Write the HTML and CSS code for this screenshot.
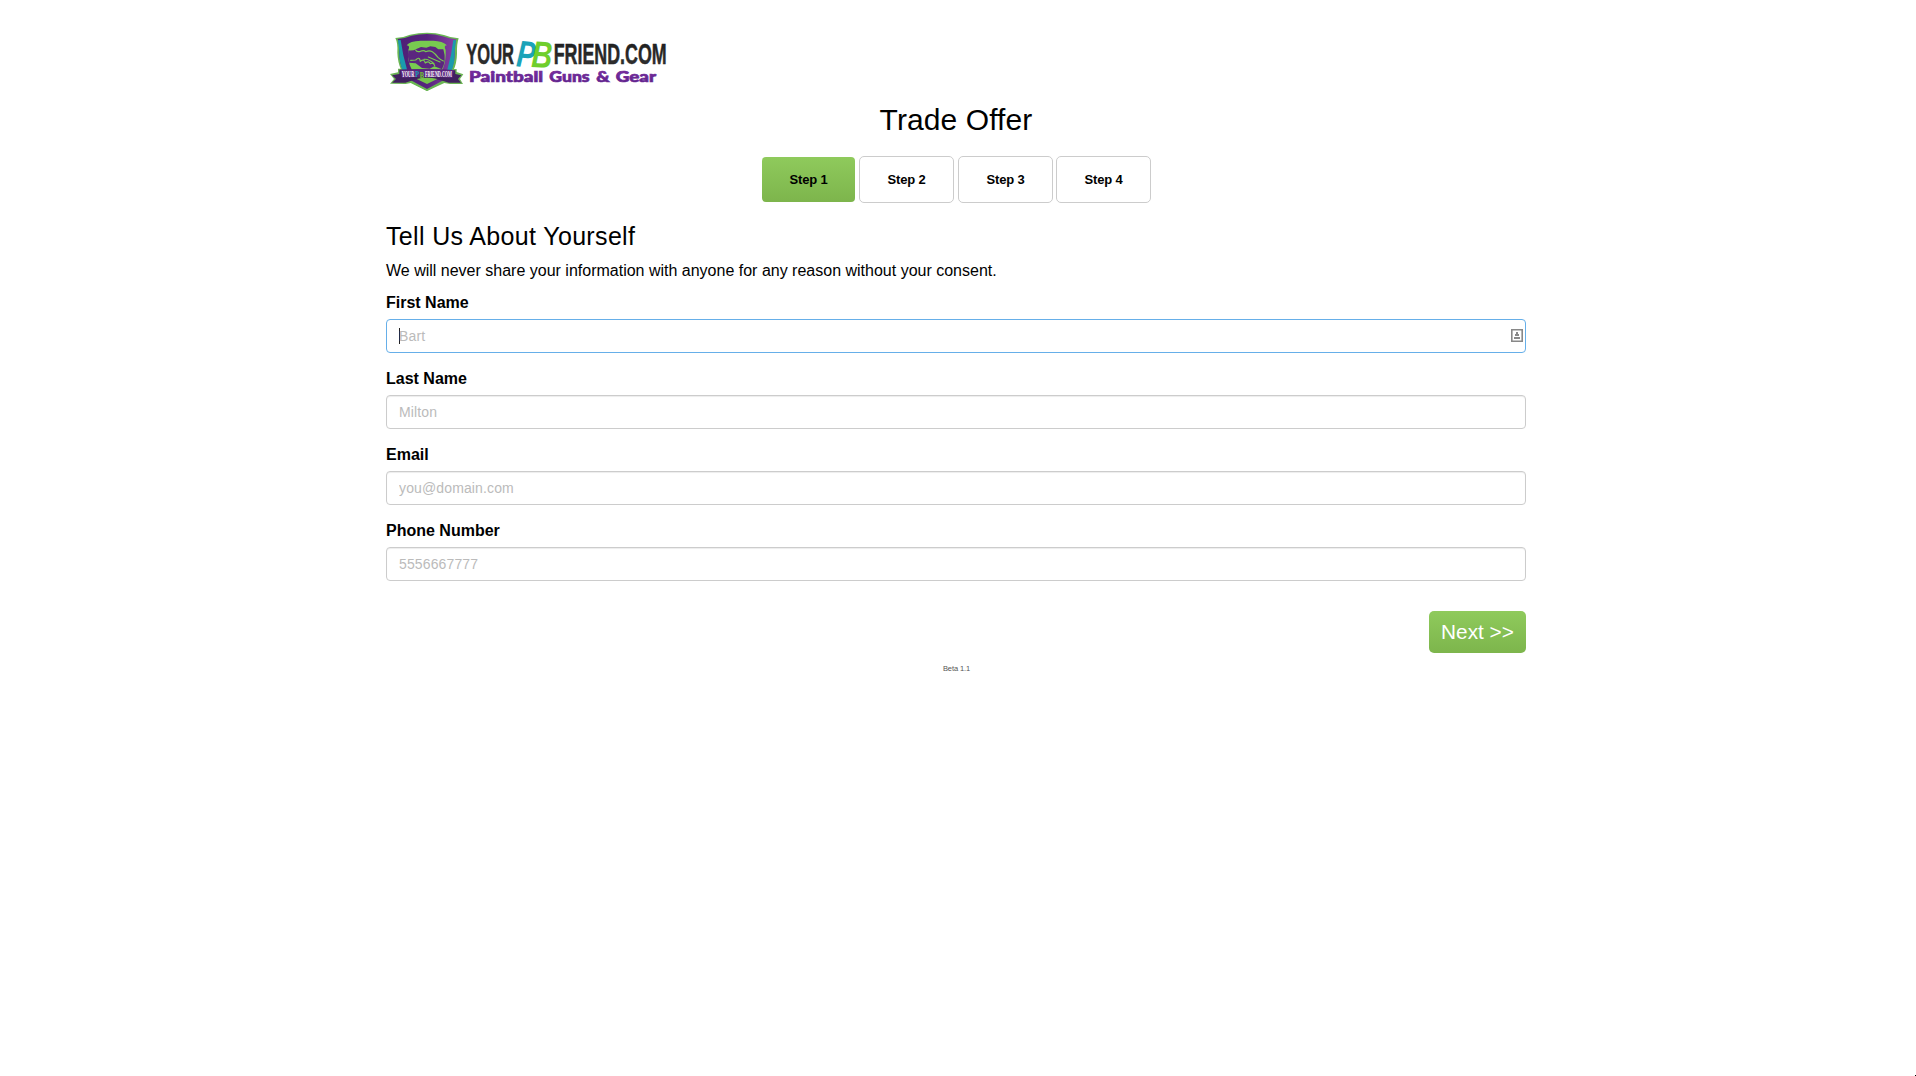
FILE: index.html
```html
<!DOCTYPE html>
<html lang="en">
<head>
<meta charset="utf-8">
<title>Trade Offer</title>
<link rel="stylesheet" href="styles.css">
</head>
<body>
<main class="container">
  <svg class="logo" viewBox="18 0 870 210" role="img" aria-label="YourPBFriend.com Paintball Guns &amp; Gear">
    <defs>
      <linearGradient id="ink" x2="0" y2="1"><stop offset="0" stop-color="#1c1c1c"/><stop offset="1" stop-color="#333"/></linearGradient>
      <linearGradient id="purple" x2="0" y2="1"><stop offset="0" stop-color="#8531a8"/><stop offset="1" stop-color="#562184"/></linearGradient>
      <linearGradient id="shield"><stop offset="0" stop-color="#4e2076"/><stop offset=".5" stop-color="#56237e"/><stop offset="1" stop-color="#8a41a5"/></linearGradient>
    </defs>
    <path fill="#6cb455" d="M30 147 54 142V131L230 132V141L250 148 240 162 249 177 210 177 193 174 141 198 92 174 77 177 30 176 42 162Z"/>
    <path fill="#69b653" d="M46 39Q70 38 90 29Q116 23 141 23Q168 23 192 30Q214 39 236 40Q230 57 231 86Q230 143 190 171L141 198 94 173Q54 141 52 83Q54 55 46 39Z"/>
    <path fill="url(#shield)" d="M53 42Q76 40 95 32Q118 27 141 27Q165 27 188 34Q210 41 229 43Q224 60 225 88Q221 145 186 168L141 192 98 169Q58 140 58 83Q59 57 53 42Z"/>
    <path fill="#1a9bad" d="M54 46 62 45Q68 90 82 137L67 134Q57 108 58 78ZM228 46 220 45Q215 90 201 137L216 134Q225 108 224 78Z"/>
    <path fill="#78cb50" d="M80 61Q89 48 122 47H160Q188 48 201 61Q190 61 197 75Q199 107 187 136H96Q80 105 85 75Q91 62 80 61Z"/>
    <path fill="#5b267f" d="M85 76Q99 78 109 72L123 66 139 68 151 64 166 66 175 73 190 73Q200 105 186 133L163 124 149 131 126 129 107 115 87 113Q81 94 85 76Z"/>
    <g fill="none" stroke="#78cb50" stroke-width="3.5" stroke-linecap="round" stroke-linejoin="round">
      <path d="M107 75Q110 82 121 79Q132 74 137 80Q148 75 157 80Q165 85 174 97Q181 104 190 108"/>
      <path d="M92 106 107 105Q119 93 121 109Q132 100 136 114Q146 106 151 116Q161 112 164 122M132 103Q146 101 162 116M145 96 180 111"/>
    </g>
    <path fill="#41205f" d="M36 151 58 147V134Q141 130 226 136V147L244 151 234 162 243 173 206 173 190 168Q141 151 92 168L76 173 36 173 48 162Z"/>
    <path fill="#5b267f" d="M61 134Q141 129 222 135L217 159Q141 151 66 159Z"/>
    <path fill="#76c34c" d="M110 162Q141 154 172 162L141 177Z"/>
    <text class="ribbon" x="65" y="155" textLength="38" lengthAdjust="spacingAndGlyphs">YOUR</text>
    <text class="ribbon teal" x="105" y="156" textLength="12" lengthAdjust="spacingAndGlyphs">P</text>
    <text class="ribbon lime" x="119" y="158" textLength="13" lengthAdjust="spacingAndGlyphs">B</text>
    <text class="ribbon" x="135" y="155" textLength="81" lengthAdjust="spacingAndGlyphs">FRIEND.COM</text>
    <text class="wordmark" x="259" y="118" textLength="143" lengthAdjust="spacingAndGlyphs">YOUR</text>
    <text class="wordmark" x="521" y="118" textLength="339" lengthAdjust="spacingAndGlyphs">FRIEND.COM</text>
    <text class="brush teal" transform="translate(407 124) rotate(5)" textLength="56" lengthAdjust="spacingAndGlyphs">P</text>
    <text class="brush lime" transform="translate(453 126) rotate(3)" textLength="62" lengthAdjust="spacingAndGlyphs">B</text>
    <text class="tagline" x="267" y="171" textLength="222" lengthAdjust="spacingAndGlyphs">Paintball</text>
    <text class="tagline" x="508" y="171" textLength="121" lengthAdjust="spacingAndGlyphs">Guns</text>
    <text class="tagline" x="649" y="171" textLength="40" lengthAdjust="spacingAndGlyphs">&amp;</text>
    <text class="tagline" x="707" y="171" textLength="121" lengthAdjust="spacingAndGlyphs">Gear</text>
  </svg>
  <h1 class="title">Trade Offer</h1>
  <nav class="steps">
    <span class="step step-active">Step 1</span>
    <span class="step">Step 2</span>
    <span class="step step-wide">Step 3</span>
    <span class="step">Step 4</span>
  </nav>
  <h2 class="heading">Tell Us About Yourself</h2>
  <p class="intro">We will never share your information with anyone for any reason without your consent.</p>
  <form class="form">
    <label class="label" for="first">First Name</label>
    <div class="field field-focus">
      <i class="caret"></i>
      <input class="input" id="first" placeholder="Bart">
      <svg class="card-icon" viewBox="0 0 12 13"><path fill="#fff" stroke="#888" stroke-width="1.6" d="M.8.8h10.4v11.4H.8z"/><path fill="#888" d="M5 3h2v3H5zM4 5h4v2H4zM3 8h6v2H3z"/></svg>
    </div>
    <label class="label" for="last">Last Name</label>
    <div class="field"><input class="input" id="last" placeholder="Milton"></div>
    <label class="label" for="email">Email</label>
    <div class="field"><input class="input" id="email" placeholder="you@domain.com"></div>
    <label class="label" for="phone">Phone Number</label>
    <div class="field"><input class="input" id="phone" placeholder="5556667777"></div>
    <button class="next" type="button">Next &gt;&gt;</button>
  </form>
  <footer class="version">Beta 1.1</footer>
</main>
<i class="corner"></i>
</body>
</html>
```
FILE: styles.css
```css
* { box-sizing: border-box; }
body {
  margin: 0;
  background: #fff;
  color: #000;
  font-family: "Liberation Sans", Arial, sans-serif;
  font-size: 16px;
  overflow: hidden;
}
.container {
  width: 1140px;
  margin: 0 auto 0 386px;
  padding-top: 25px;
  display: flex;
  flex-direction: column;
}
.logo { width: 290px; height: 70px; overflow: visible; }
.wordmark {
  font: bold 89px "Liberation Sans Narrow", "Liberation Sans", sans-serif;
  fill: url(#ink);
  stroke: #222;
  stroke-width: 1.5;
}
.tagline {
  font: 900 45px Lato, sans-serif;
  fill: url(#purple);
  stroke: #6b2896;
  stroke-width: 2;
}
.brush { font: italic bold 112px "Liberation Sans", sans-serif; }
.ribbon { font: bold 23px "Liberation Serif", serif; fill: #fff; }
.teal { fill: #1ba3b8; }
.lime { fill: #6fce2c; }
.title {
  margin: 7px 0 0;
  font-size: 30px;
  font-weight: normal;
  line-height: 36px;
  letter-spacing: .1px;
  text-align: center;
}
.steps {
  display: flex;
  justify-content: center;
  align-items: center;
  gap: 4px;
  height: 47px;
  margin-top: 18px;
}
.step {
  width: 95px;
  height: 47px;
  border: 1px solid #ccc;
  border-radius: 5px;
  padding-left: 1px;
  font-size: 13px;
  letter-spacing: -.15px;
  font-weight: bold;
  line-height: 46px;
  text-align: center;
}
.step-active {
  width: 93px;
  height: 45px;
  border: 0;
  border-radius: 4px;
  background: linear-gradient(#8fca5c, #7db54c);
}
.step-wide { margin-right: -1px; }
.heading {
  margin: 19px 0 0;
  font-size: 25px;
  font-weight: normal;
  line-height: 29px;
  letter-spacing: .34px;
}
.intro { margin: 10px 0 0; line-height: 20px; }
.form { display: flex; flex-direction: column; margin-top: 4px; }
.label { font-weight: bold; line-height: 20px; margin: 8px 0 6px; }
.field {
  display: flex;
  align-items: center;
  height: 34px;
  margin-bottom: 8px;
  padding: 0 2px 0 12px;
  border: 1px solid #ccc;
  border-radius: 4px;
  box-shadow: inset 0 1px 1px rgba(0, 0, 0, .075);
}
.field-focus { border-color: #66afe9; box-shadow: none; }
.input {
  flex: 1;
  min-width: 0;
  padding: 0;
  border: 0;
  outline: 0;
  background: transparent;
  font: 14px "Liberation Sans", Arial, sans-serif;
  letter-spacing: .13px;
}
.input::placeholder { color: #bbb; opacity: 1; }
.caret { width: 1px; height: 16px; margin-right: -1px; background: #222; }
.card-icon { width: 12px; height: 13px; margin-bottom: 1px; }
.next {
  align-self: flex-end;
  width: 97px;
  height: 42px;
  margin-top: 22px;
  padding: 0;
  border: 0;
  border-radius: 5px;
  background: linear-gradient(#8fca5c, #7db54c);
  color: #fff;
  font: 20.8px "Liberation Sans", Arial, sans-serif;
}
.version {
  margin-top: 11px;
  padding-left: 1px;
  color: #555;
  font-size: 7.5px;
  line-height: 10px;
  letter-spacing: -.1px;
  text-align: center;
}
.corner {
  position: absolute;
  right: 0;
  bottom: 0;
  width: 1px;
  height: 1px;
  background: #000;
}
```
